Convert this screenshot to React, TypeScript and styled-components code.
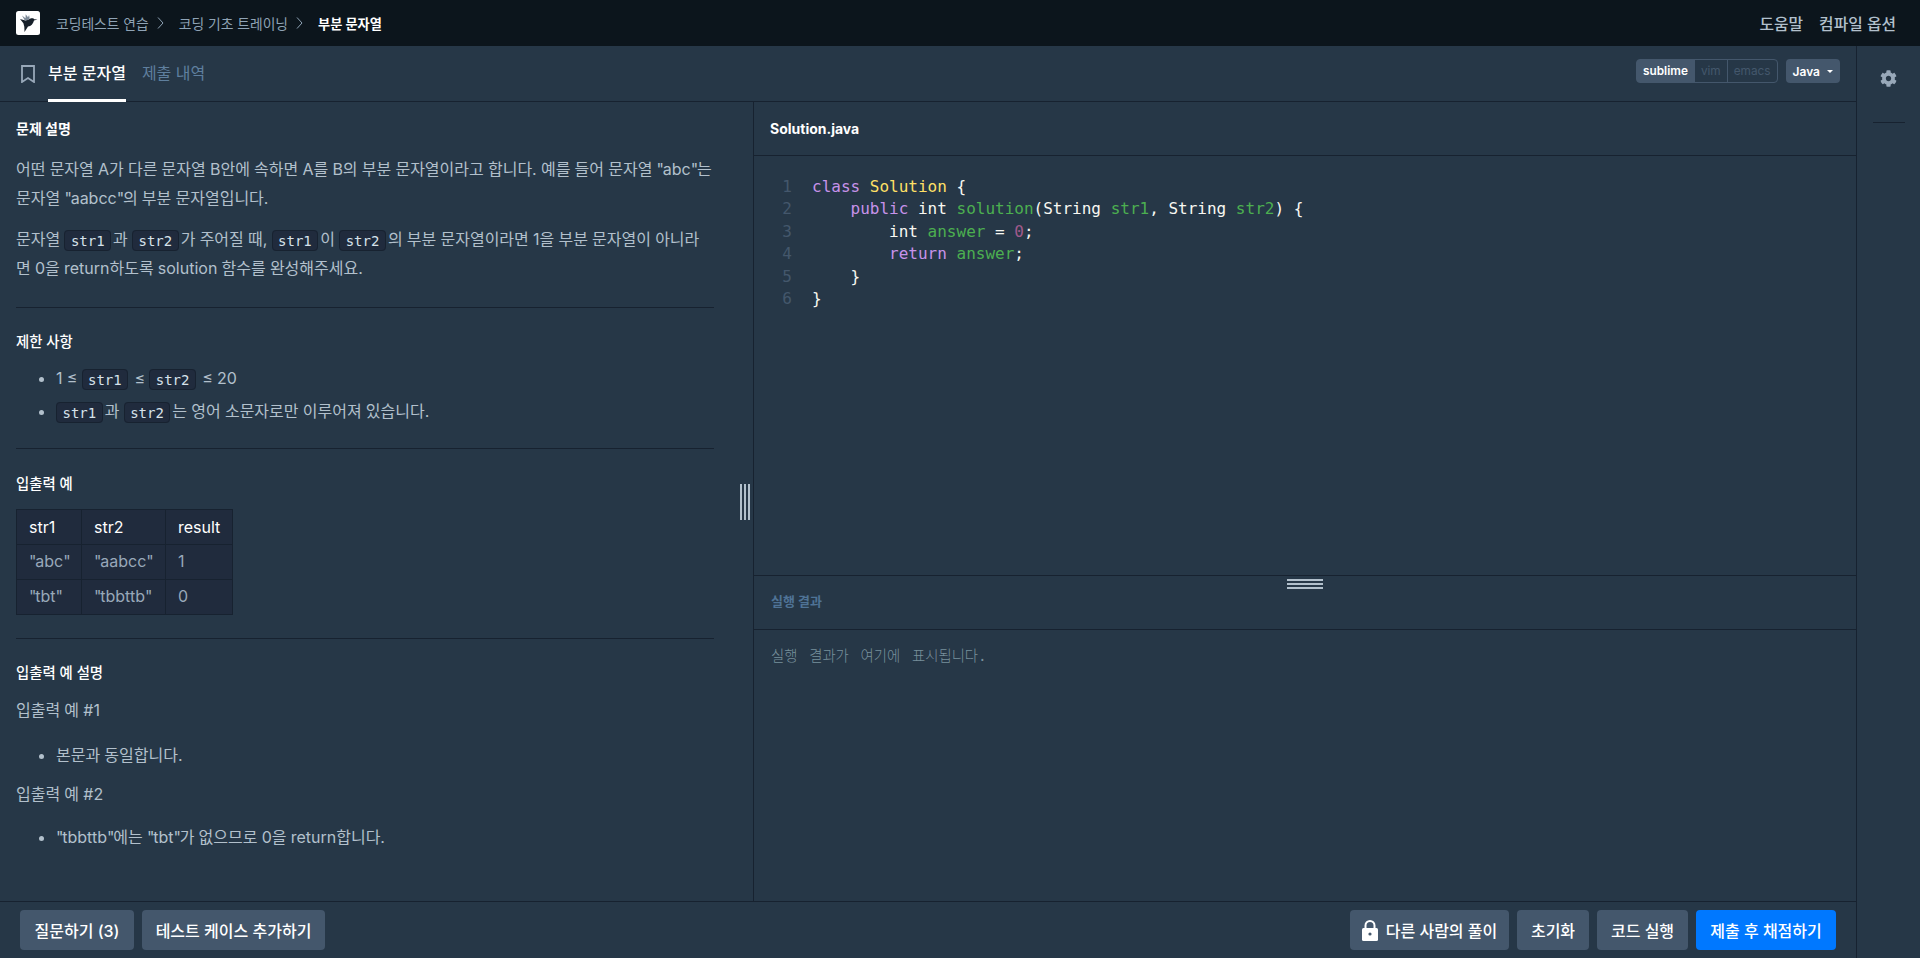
import React from "react";
import styled, { createGlobalStyle } from "styled-components";
import { FaCog } from "react-icons/fa";

const Global = createGlobalStyle`
  html, body { margin: 0; padding: 0; height: 100%; background: #263747; overflow: hidden; }
  body { font-family: Inter, "Noto Sans CJK KR", sans-serif; color: #b2c0cc; }
  * { box-sizing: border-box; }
`;

const Page = styled.div`
  width: 1920px; height: 958px; display: flex; flex-direction: column; background: #263747;
`;
const TopBar = styled.header`
  height: 46px; flex: none; background: #0c151c; display: flex; align-items: center; justify-content: space-between;
  padding: 0 24px 0 16px;
`;
const Crumbs = styled.nav`display: flex; align-items: center; font-size: 13.8px; color: #8fa3b5;`;
const LogoBox = styled.svg`width: 24px; height: 24px; margin-right: 16px; flex: none;`;
const Crumb = styled.span`white-space: nowrap;`;
const CrumbNow = styled.span`color: #fff; font-weight: 700; font-size: 13.2px; white-space: nowrap;`;
const Chevron = styled.svg`width: 7px; height: 12px; margin: 0 15px 0 8px; flex: none;`;
const TopLinks = styled.div`display: flex; gap: 16px; font-size: 15.8px; color: #b2c0cc; font-weight: 500;`;

const Main = styled.div`flex: 1; display: flex; min-height: 0;`;
const Content = styled.div`flex: 1; display: flex; flex-direction: column; min-width: 0;`;
const Rail = styled.aside`
  width: 64px; flex: none; border-left: 1px solid #172230; display: flex; flex-direction: column; align-items: center;
`;
const GearBtn = styled.div`
  height: 76px; width: 100%; display: flex; align-items: center; justify-content: center; padding-bottom: 12px; color: #98a8b9;
`;
const RailRule = styled.div`width: 32px; height: 1px; background: #172230;`;

const TabBar = styled.div`
  height: 56px; flex: none; border-bottom: 1px solid #172230; display: flex; align-items: stretch; justify-content: space-between;
  padding: 0 16px 0 21px;
`;
const Tabs = styled.div`display: flex; align-items: stretch;`;
const BookmarkIcon = styled.svg`width: 14px; height: 18px; align-self: center; margin-right: 13px;`;
const Tab = styled.div<{ $active?: boolean }>`
  display: flex; align-items: center; font-size: 16px; margin-right: 16px; height: 56px; padding-bottom: 1px;
  color: ${p => (p.$active ? "#fff" : "#5f7f9e")};
  font-weight: ${p => (p.$active ? 500 : 400)};
  border-bottom: 3px solid ${p => (p.$active ? "#fff" : "transparent")};
`;
const Controls = styled.div`display: flex; align-items: center; gap: 8px; padding-bottom: 5px;`;
const KeyGroup = styled.div`display: flex; height: 24px;`;
const KeyBtn = styled.div<{ $active?: boolean; $pos?: "first" | "mid" | "last" }>`
  display: flex; align-items: center; padding: 0 6px; font-size: 11.8px;
  font-weight: ${p => (p.$active ? 600 : 400)};
  color: ${p => (p.$active ? "#fff" : "#44576c")};
  background: ${p => (p.$active ? "#44576c" : "transparent")};
  border: 1px solid #44576c;
  margin-left: ${p => (p.$pos === "first" ? 0 : "-1px")};
  border-radius: ${p => (p.$pos === "first" ? "4px 0 0 4px" : p.$pos === "last" ? "0 4px 4px 0" : "0")};
`;
const LangBtn = styled.div`
  height: 24px; display: flex; align-items: center; gap: 7px; padding: 0 7px; border-radius: 4px; background: #44576c; color: #fff;
  font-size: 12px; font-weight: 600;
`;
const Caret = styled.span`
  width: 0; height: 0; border-left: 3px solid transparent; border-right: 3px solid transparent; border-top: 3.5px solid #fff;
`;

const Split = styled.div`flex: 1; display: flex; min-height: 0;`;
const LeftPane = styled.section`
  width: 753px; flex: none; position: relative; padding: 0 39px 0 16px; overflow: hidden;
`;
const VHandle = styled.div`
  position: absolute; right: 3px; top: 382px; width: 10px; height: 36px;
  display: flex; justify-content: space-between;
`;
const VLine = styled.span`width: 2px; height: 100%; background: #b2c0cc;`;
const Heading = styled.h6<{ $mb: number; $bold?: boolean }>`
  margin: 0 0 ${p => p.$mb}px; font-size: ${p => (p.$bold ? 14 : 14.4)}px; line-height: 17px; font-weight: ${p => (p.$bold ? 700 : 500)}; color: #fff;
`;
const Para = styled.p<{ $mb: number }>`
  margin: 0 0 ${p => p.$mb}px; font-size: 16px; line-height: 29px; color: #b2c0cc; white-space: nowrap; word-spacing: -0.3px;
`;
const Q = styled.span`letter-spacing: -1.2px;`;
const Code = styled.code`
  font-family: "DejaVu Sans Mono", "Liberation Mono", monospace; font-size: 14px; line-height: 20px; color: #d7e2eb; word-spacing: 0;
  background: #202b3d; border: 1px solid #172230; border-radius: 4px; padding: 1.5px 5.5px; margin: 0 2px 0 0;
`;
const Rule = styled.hr`border: 0; border-top: 1px solid #172230; margin: 0;`;
const Section = styled.div<{ $top: number; $bottom: number }>`
  padding-top: ${p => p.$top}px; padding-bottom: ${p => p.$bottom}px;
`;
const List = styled.ul<{ $mb: number }>`margin: 0 0 ${p => p.$mb}px; padding: 0 0 0 40px;`;
const Item = styled.li<{ $mb: number }>`font-size: 16px; line-height: 29px; margin-bottom: ${p => p.$mb}px; color: #b2c0cc; word-spacing: -0.3px;`;
const Table = styled.table`
  border-collapse: collapse; background: #202b3d; font-size: 16px; line-height: 22px; table-layout: fixed; width: 216px;
`;
const Th = styled.td<{ $w: number }>`border: 1px solid #172230; padding: 6px 12px; color: #fff; height: 34px; width: ${p => p.$w}px; white-space: nowrap;`;
const Td = styled.td`border: 1px solid #172230; padding: 5px 12px 7px; color: #98a8b9; height: 35px; white-space: nowrap;`;

const RightPane = styled.section`flex: 1; border-left: 1px solid #172230; display: flex; flex-direction: column; min-width: 0; position: relative;`;
const FileHead = styled.div`
  height: 54px; flex: none; border-bottom: 1px solid #172230; display: flex; align-items: center; padding-left: 16px;
  color: #fff; font-size: 14px; font-weight: 700;
`;
const Editor = styled.div`
  height: 419px; flex: none; padding-top: 20px; display: flex;
  font-family: "DejaVu Sans Mono", monospace; font-size: 16px; line-height: 22.4px; color: #f8f8f2;
`;
const Gutter = styled.div`width: 58px; flex: none; text-align: right; padding-right: 20px; color: #44576c;`;
const CodeBody = styled.pre`margin: 0; font: inherit; white-space: pre;`;
const Kw = styled.span`color: #c792ea;`;
const Cls = styled.span`color: #ffe066;`;
const Fn = styled.span`color: #4caf50;`;
const Num = styled.span`color: #a05a8c;`;
const OutHead = styled.div`
  height: 55px; flex: none; border-top: 1px solid #172230; border-bottom: 1px solid #172230; display: flex; align-items: center;
  padding: 0 0 4px 17px; font-size: 13px; font-weight: 700; color: #4f7396; position: relative;
`;
const HHandle = styled.div`
  position: absolute; left: 50%; top: 3px; transform: translateX(-50%); width: 36px; height: 10px;
  display: flex; flex-direction: column; justify-content: space-between;
`;
const HLine = styled.span`height: 2px; width: 100%; background: #b2c0cc;`;
const OutBody = styled.div`
  flex: 1; padding: 15px 17px; font-family: "DejaVu Sans Mono", "Noto Sans CJK KR", monospace; font-weight: 300; font-size: 14.4px; line-height: 22px; color: #78909c;
  word-spacing: 3px;
`;

const Footer = styled.footer`
  height: 57px; flex: none; border-top: 1px solid #172230; display: flex; justify-content: space-between; align-items: center;
  padding: 0 20px;
`;
const Group = styled.div`display: flex; gap: 8px; align-items: center;`;
const Btn = styled.button<{ $primary?: boolean; $w: number }>`
  height: 40px; width: ${p => p.$w}px; border: 0; border-radius: 4px; display: flex; align-items: center; justify-content: center; gap: 8px;
  font-family: Inter, "Noto Sans CJK KR", sans-serif; font-size: 16px; font-weight: 500; color: #fff; padding: 0; white-space: nowrap;
  background: ${p => (p.$primary ? "#0078ff" : "#44576c")};
`;

const Sep = () => (
  <Chevron viewBox="0 0 7 12"><path d="M1 .5l5 5.500-5 5.500" fill="none" stroke="#8fa3b5" strokeWidth="1" /></Chevron>
);

export default function App() {
  return (
    <Page>
      <Global />
      <TopBar>
        <Crumbs>
          <LogoBox viewBox="0 0 24 24">
            <rect width="24" height="24" rx="2.5" fill="#fff" />
            <path d="M4 8l5.500 1.400 3-.9 2.600-1.300 2.100.1 1 1 3.300.2-3.500.9c-.8 3.400-3 5.600-6 6.200L8.500 21l-.2-5.200-.9-3.600z" fill="#17202a" />
            <path d="M6 4.500l3.500 2.800.2-4 2.300 2.900 1.100-2.300.6 3.700-1.600 1.300-3.300.6z" fill="#7d8a98" />
          </LogoBox>
          <Crumb>코딩테스트 연습</Crumb><Sep />
          <Crumb>코딩 기초 트레이닝</Crumb><Sep />
          <CrumbNow>부분 문자열</CrumbNow>
        </Crumbs>
        <TopLinks><span>도움말</span><span>컴파일 옵션</span></TopLinks>
      </TopBar>
      <Main>
        <Content>
          <TabBar>
            <Tabs>
              <BookmarkIcon viewBox="0 0 14 18"><path d="M1 1h12v16L7 13 1 17z" fill="none" stroke="#98a8b9" strokeWidth="1.800" /></BookmarkIcon>
              <Tab $active>부분 문자열</Tab>
              <Tab>제출 내역</Tab>
            </Tabs>
            <Controls>
              <KeyGroup>
                <KeyBtn $active $pos="first">sublime</KeyBtn>
                <KeyBtn $pos="mid">vim</KeyBtn>
                <KeyBtn $pos="last">emacs</KeyBtn>
              </KeyGroup>
              <LangBtn>Java <Caret /></LangBtn>
            </Controls>
          </TabBar>
          <Split>
            <LeftPane>
              <VHandle><VLine /><VLine /><VLine /></VHandle>
              <Section $top={18} $bottom={12}>
                <Heading $bold $mb={18}>문제 설명</Heading>
                <Para $mb={12}>어떤 문자열 A가 다른 문자열 B안에 속하면 A를 B의 부분 문자열이라고 합니다. 예를 들어 문자열 <Q>"</Q>abc<Q>"</Q>는<br />문자열 <Q>"</Q>aabcc<Q>"</Q>의 부분 문자열입니다.</Para>
                <Para $mb={12}>문자열 <Code>str1</Code>과 <Code>str2</Code>가 주어질 때, <Code>str1</Code>이 <Code>str2</Code>의 부분 문자열이라면 1을 부분 문자열이 아니라<br />면 0을 return하도록 solution 함수를 완성해주세요.</Para>
              </Section>
              <Rule />
              <Section $top={25} $bottom={17}>
                <Heading $mb={14}>제한 사항</Heading>
                <List $mb={0}>
                  <Item $mb={4}>1 ≤ <Code>str1</Code> ≤ <Code>str2</Code> ≤ 20</Item>
                  <Item $mb={5}><Code>str1</Code>과 <Code>str2</Code>는 영어 소문자로만 이루어져 있습니다.</Item>
                </List>
              </Section>
              <Rule />
              <Section $top={26} $bottom={23}>
                <Heading $mb={17}>입출력 예</Heading>
                <Table>
                  <tbody>
                    <tr><Th $w={65}>str1</Th><Th $w={84}>str2</Th><Th $w={67}>result</Th></tr>
                    <tr><Td><Q>"</Q>abc<Q>"</Q></Td><Td><Q>"</Q>aabcc<Q>"</Q></Td><Td>1</Td></tr>
                    <tr><Td><Q>"</Q>tbt<Q>"</Q></Td><Td><Q>"</Q>tbbttb<Q>"</Q></Td><Td>0</Td></tr>
                  </tbody>
                </Table>
              </Section>
              <Rule />
              <Section $top={25} $bottom={0}>
                <Heading $mb={15}>입출력 예 설명</Heading>
                <Para $mb={16}>입출력 예 #1</Para>
                <List $mb={10}><Item $mb={5}>본문과 동일합니다.</Item></List>
                <Para $mb={14}>입출력 예 #2</Para>
                <List $mb={0}><Item $mb={0}><Q>"</Q>tbbttb<Q>"</Q>에는 <Q>"</Q>tbt<Q>"</Q>가 없으므로 0을 return합니다.</Item></List>
              </Section>
            </LeftPane>
            <RightPane>
              <FileHead>Solution.java</FileHead>
              <Editor>
                <Gutter>1<br />2<br />3<br />4<br />5<br />6</Gutter>
                <CodeBody>
<Kw>class</Kw> <Cls>Solution</Cls> {"{\n"}
{"    "}<Kw>public</Kw> int <Fn>solution</Fn>(String <Fn>str1</Fn>, String <Fn>str2</Fn>) {"{\n"}
{"        "}int <Fn>answer</Fn> = <Num>0</Num>;{"\n"}
{"        "}<Kw>return</Kw> <Fn>answer</Fn>;{"\n"}
{"    }\n"}
{"}"}
                </CodeBody>
              </Editor>
              <OutHead>
                <HHandle><HLine /><HLine /><HLine /></HHandle>
                실행 결과
              </OutHead>
              <OutBody>실행 결과가 여기에 표시됩니다.</OutBody>
            </RightPane>
          </Split>
          <Footer>
            <Group>
              <Btn $w={114}>질문하기 (3)</Btn>
              <Btn $w={183}>테스트 케이스 추가하기</Btn>
            </Group>
            <Group>
              <Btn $w={159}>
                <svg width="16" height="21" viewBox="0 0 16 21"><path d="M3.500 8V5.500a4.500 4.500 0 0 1 9 0V8" fill="none" stroke="#fff" strokeWidth="2" /><rect x="0" y="8" width="16" height="13" rx="1.500" fill="#fff" /><circle cx="8" cy="14" r="1.600" fill="#44576c" /></svg>
                다른 사람의 풀이
              </Btn>
              <Btn $w={72}>초기화</Btn>
              <Btn $w={91}>코드 실행</Btn>
              <Btn $primary $w={140}>제출 후 채점하기</Btn>
            </Group>
          </Footer>
        </Content>
        <Rail>
          <GearBtn><FaCog size={17} /></GearBtn>
          <RailRule />
        </Rail>
      </Main>
    </Page>
  );
}
